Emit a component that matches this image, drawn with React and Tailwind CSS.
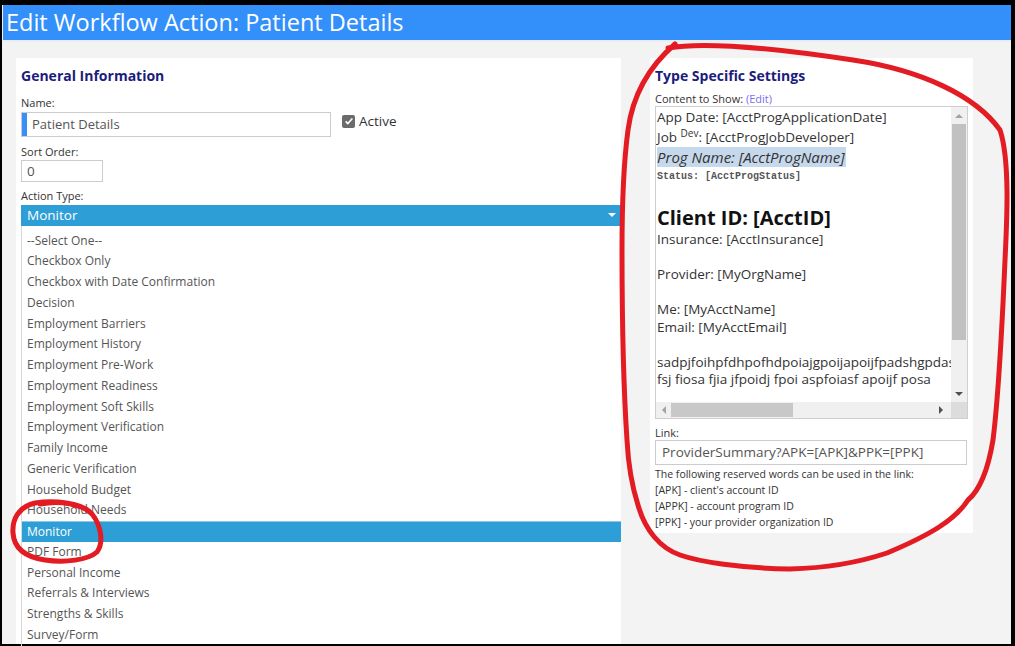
const actionTypes = [
  '--Select One--',
  'Checkbox Only',
  'Checkbox with Date Confirmation',
  'Decision',
  'Employment Barriers',
  'Employment History',
  'Employment Pre-Work',
  'Employment Readiness',
  'Employment Soft Skills',
  'Employment Verification',
  'Family Income',
  'Generic Verification',
  'Household Budget',
  'Household Needs',
  'Monitor',
  'PDF Form',
  'Personal Income',
  'Referrals & Interviews',
  'Strengths & Skills',
  'Survey/Form',
];

const selected = 'Monitor';

function Label({ children }) {
  return <div className="text-[11px] leading-[14px] text-[#333]">{children}</div>;
}

function Arrow({ dir, className }) {
  const pts = {
    up: '0,4 4,0 8,4',
    down: '0,0 8,0 4,4',
    left: '4,0 4,8 0,4',
    right: '0,0 0,8 4,4',
  }[dir];
  const box = dir === 'up' || dir === 'down' ? '0 0 8 4' : '0 0 4 8';
  const size = dir === 'up' || dir === 'down' ? 'w-[8px] h-[4px]' : 'w-[4px] h-[8px]';
  return (
    <svg viewBox={box} className={`${size} ${className}`}>
      <polygon points={pts} fill="currentColor" />
    </svg>
  );
}

function GeneralInfo() {
  return (
    <div className="w-[605px] bg-white pl-[5px] pt-[8px] flex flex-col">
      <h2 className="text-[14px] leading-[20px] font-bold text-[#1c1c7c]">General Information</h2>
      <div className="mt-[10px]">
        <Label>Name:</Label>
      </div>
      <div className="flex items-start mt-[2px]">
        <div className="w-[310px] h-[25px] border border-[#ccc] flex items-center">
          <div className="w-[5px] h-full bg-[#3a8ef5]" />
          <span className="pl-[5px] text-[13px] text-[#555]">Patient Details</span>
        </div>
        <label className="flex items-center ml-[11px] -mt-[1px] gap-[4px]">
          <span className="w-[13px] h-[13px] rounded-[2px] bg-[#6b6b6b] flex items-center justify-center">
            <svg viewBox="0 0 12 12" className="w-[10px] h-[10px]">
              <path d="M2 6.5l2.6 2.6L10 3" fill="none" stroke="#fff" strokeWidth="2" />
            </svg>
          </span>
          <span className="text-[13.5px] text-[#333]">Active</span>
        </label>
      </div>
      <div className="mt-[8px]">
        <Label>Sort Order:</Label>
      </div>
      <div className="w-[82px] h-[25px] border border-[#ccc] flex items-center pl-[5px] text-[13.5px] text-[#555] mt-[1px]">
        0
      </div>
      <div className="mt-[7px]">
        <Label>Action Type:</Label>
      </div>
      <div className="h-[24px] bg-[#2e9ed6] flex items-center justify-between pl-[6px] pr-[5px] mt-[2px]">
        <span className="text-[13.5px] text-white">Monitor</span>
        <Arrow dir="down" className="text-white" />
      </div>
      <div className="h-[1px] bg-[#9fd0ec]" />
      <ul className="border-l border-[#d8d8d8] pt-[5px]">
        {actionTypes.map((t) =>
          t === selected ? (
            <li key={t} className="h-[20.75px] leading-[20.75px] pl-[5px] text-[12px] bg-[#2e9ed6] text-white border-t border-[#8cc6e8]">
              {t}
            </li>
          ) : (
            <li key={t} className="h-[20.75px] leading-[20.75px] pl-[5px] text-[12px] text-[#555]">
              {t}
            </li>
          )
        )}
      </ul>
    </div>
  );
}

function ContentPreview() {
  return (
    <div className="w-[313px] h-[313px] border border-[#cfcfcf] grid grid-cols-[295px_16px] grid-rows-[295px_16px]">
      <div className="overflow-hidden whitespace-nowrap text-[13.5px] text-[#333] pl-[1px]">
        <div className="h-[20px] leading-[20px]">App Date: [AcctProgApplicationDate]</div>
        <div className="h-[20px] leading-[20px]">
          Job <sup className="text-[10px]">Dev</sup>: [AcctProgJobDeveloper]
        </div>
        <div className="h-[20px] leading-[20px] text-[15px] italic">
          <span className="bg-[#c6d8ec] pr-[1px]">Prog Name: [AcctProgName]</span>
        </div>
        <div className="h-[20px] leading-[20px] text-[10px] font-bold text-[#555] font-['Liberation_Mono',monospace]">
          Status: [AcctProgStatus]
        </div>
        <div className="h-[18px]" />
        <div className="h-[26px] leading-[26px] text-[20px] font-bold text-[#111]">Client ID: [AcctID]</div>
        <div className="h-[17.5px] leading-[17.5px]">Insurance: [AcctInsurance]</div>
        <div className="h-[17.5px]" />
        <div className="h-[17.5px] leading-[17.5px]">Provider: [MyOrgName]</div>
        <div className="h-[17.5px]" />
        <div className="h-[17.5px] leading-[17.5px]">Me: [MyAcctName]</div>
        <div className="h-[17.5px] leading-[17.5px]">Email: [MyAcctEmail]</div>
        <div className="h-[17.5px]" />
        <div className="h-[17.5px] leading-[17.5px]">sadpjfoihpfdhpofhdpoiajgpoijapoijfpadshgpdashgpoi</div>
        <div className="h-[17.5px] leading-[17.5px]">fsj fiosa fjia jfpoidj fpoi aspfoiasf apoijf posa</div>
      </div>
      <div className="bg-[#f0f0f0] flex flex-col items-center">
        <div className="h-[17px] flex items-center">
          <Arrow dir="up" className="text-[#a3a3a3]" />
        </div>
        <div className="w-[14px] h-[216px] bg-[#c1c1c1]" />
        <div className="flex-1 flex items-end pb-[6px]">
          <Arrow dir="down" className="text-[#505050]" />
        </div>
      </div>
      <div className="bg-[#f0f0f0] flex items-center pl-[6px] pr-[8px]">
        <Arrow dir="left" className="text-[#a3a3a3]" />
        <div className="ml-[5px] w-[122px] h-[14px] bg-[#c8c8c8]" />
        <div className="flex-1" />
        <Arrow dir="right" className="text-[#505050]" />
      </div>
      <div className="bg-[#dcdcdc]" />
    </div>
  );
}

function TypeSettings() {
  return (
    <div className="w-[323px] h-[475px] bg-white pl-[5px] pt-[8px] flex flex-col">
      <h2 className="text-[14px] leading-[20px] font-bold text-[#1c1c7c]">Type Specific Settings</h2>
      <div className="mt-[6px]">
        <Label>
          Content to Show: <span className="text-[#7b6cf0]">(Edit)</span>
        </Label>
      </div>
      <ContentPreview />
      <div className="mt-[7px]">
        <Label>Link:</Label>
      </div>
      <div className="w-[312px] h-[25px] border border-[#ccc] flex items-center pl-[6px] text-[13.5px] text-[#555]">
        ProviderSummary?APK=[APK]&amp;PPK=[PPK]
      </div>
      <div className="text-[10.5px] leading-[16px] text-[#333] mt-[1px]">
        <div>The following reserved words can be used in the link:</div>
        <div>[APK] - client's account ID</div>
        <div>[APPK] - account program ID</div>
        <div>[PPK] - your provider organization ID</div>
      </div>
    </div>
  );
}

export default function App() {
  return (
    <div className="relative w-[1015px] h-[646px] bg-black pt-[5px] pl-[2px] pr-[4px] pb-[2px] overflow-hidden font-['Open_Sans','Noto_Sans',sans-serif]">
      <div className="h-full bg-[#f3f3f3] flex flex-col">
        <div className="h-[35px] ml-[1px] bg-[#3390fa] pl-[3px] text-[23.5px] leading-[35px] text-white">
          Edit Workflow Action: Patient Details
        </div>
        <div className="h-[2px] bg-[#e9eef5]" />
        <div className="flex-1 flex items-start pt-[16px] pl-[14px] min-h-0">
          <div className="self-stretch flex">
            <GeneralInfo />
          </div>
          <div className="ml-[29px]">
            <TypeSettings />
          </div>
        </div>
      </div>

      {/* red marker rings */}
      <svg className="absolute inset-0 pointer-events-none" width="1015" height="646" viewBox="0 0 1015 646">
        <g fill="none" stroke="#e31b23" strokeWidth="5" strokeLinecap="round" strokeLinejoin="round">
          <path d="M668 48 C700 42 760 46 853 60 C920 70 975 95 1000 130 C1010 160 1007 220 1005 260 C1002 330 998 400 993 440 C988 470 980 490 968 500 C955 520 930 535 887 553 C860 562 830 568 790 569 C740 568 700 562 680 555 C660 548 645 530 638 505 C630 480 628 460 627 440 C623 380 622 300 622 250 C622 200 624 160 628 130 C632 100 645 70 675 44" />
          <path d="M90 512 C80 503 55 500 35 503 C18 507 12 520 13 533 C14 548 25 557 45 560 C65 563 88 560 97 552 C104 543 101 525 92 514 C82 504 60 500 40 504" />
        </g>
      </svg>
    </div>
  );
}
